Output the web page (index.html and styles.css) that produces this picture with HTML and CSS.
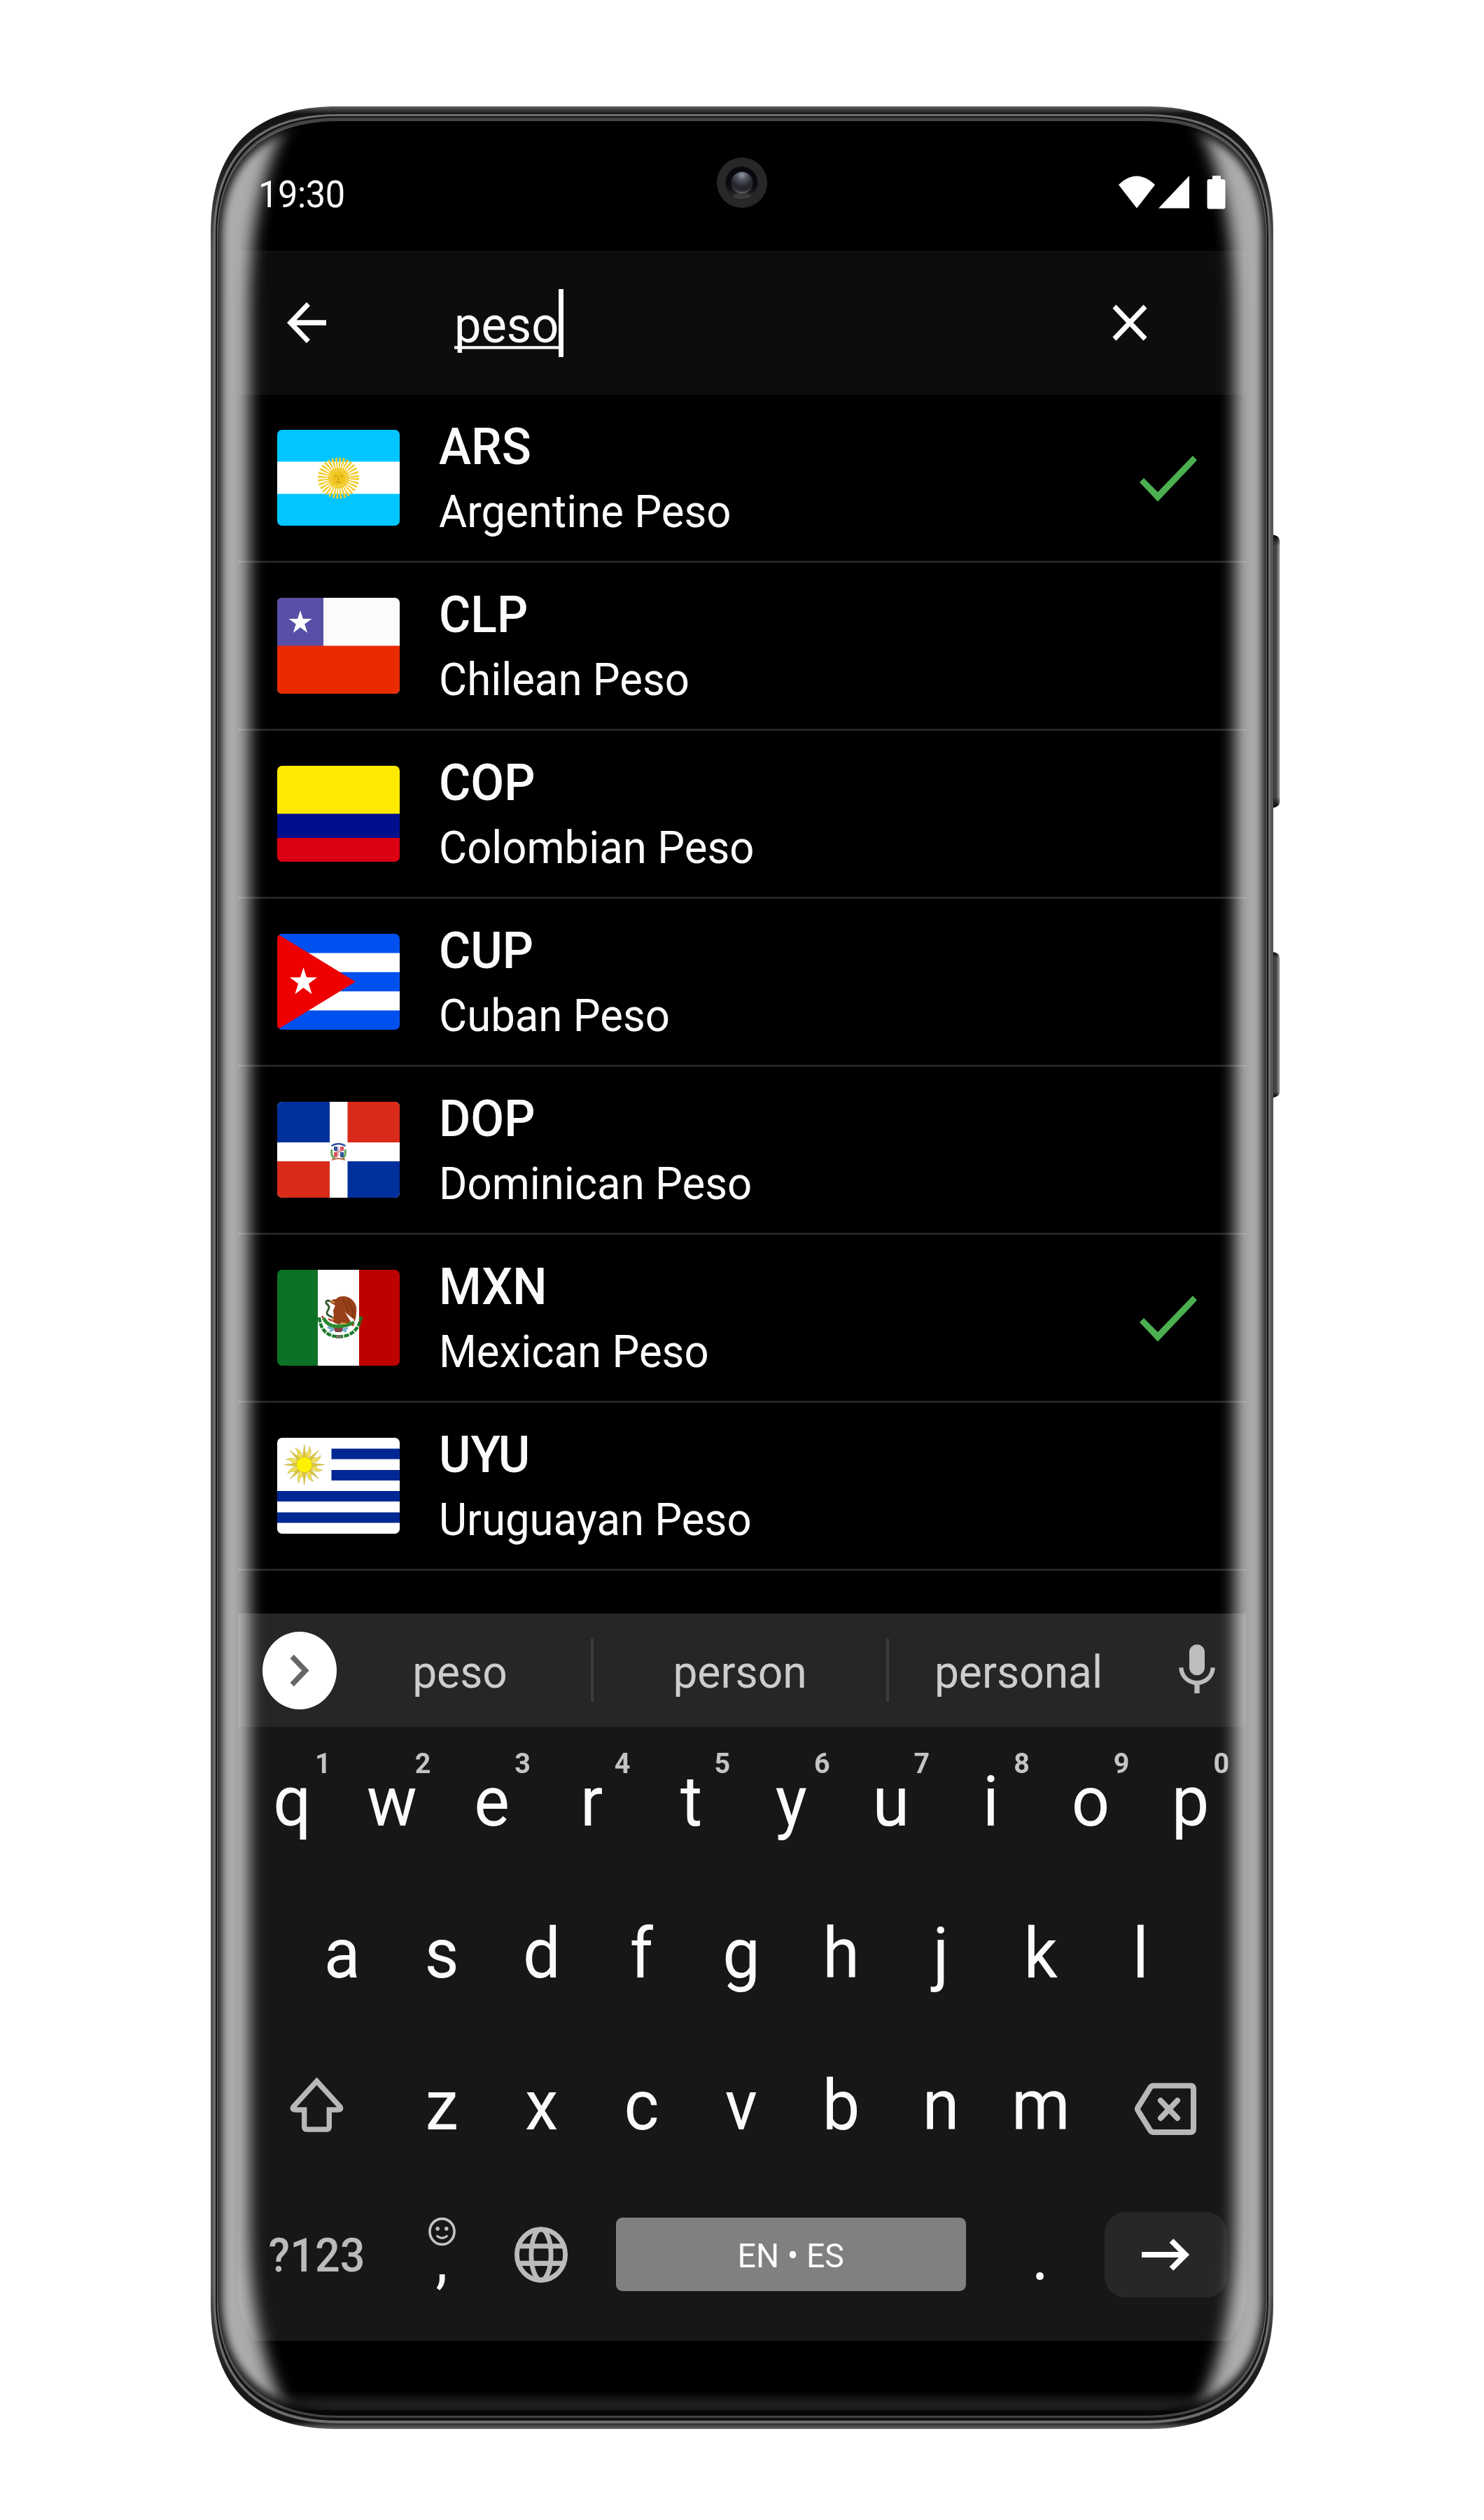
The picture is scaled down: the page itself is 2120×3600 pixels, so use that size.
FILE: index.html
```html
<!DOCTYPE html>
<html lang="en">
<head>
<meta charset="utf-8">
<title>Currency search</title>
<link rel="stylesheet" href="styles.css">
</head>
<body>
<main class="phone">
  <svg class="phone-body" viewBox="301 152 1528 3318" aria-hidden="true">
    <defs>
      <linearGradient id="shell" x1="0" y1="152" x2="0" y2="3470" gradientUnits="userSpaceOnUse">
        <stop offset="0" stop-color="#626262"/><stop offset=".0032" stop-color="#141414"/><stop offset=".025" stop-color="#1c1c1c"/><stop offset=".06" stop-color="#555"/>
        <stop offset=".94" stop-color="#555"/><stop offset=".975" stop-color="#1c1c1c"/><stop offset=".9968" stop-color="#141414"/><stop offset="1" stop-color="#6a6a6a"/>
      </linearGradient>
      <linearGradient id="button" x1="0" x2="1" y1="0" y2="0">
        <stop offset="0" stop-color="#222"/><stop offset=".3" stop-color="#484848"/><stop offset=".65" stop-color="#484848"/><stop offset=".75" stop-color="#888"/><stop offset="1" stop-color="#777"/>
      </linearGradient>
      <linearGradient id="button-ends" x1="0" x2="0" y1="0" y2="1">
        <stop offset="0" stop-color="#000" stop-opacity=".9"/><stop offset=".04" stop-color="#000" stop-opacity="0"/><stop offset=".96" stop-color="#000" stop-opacity="0"/><stop offset="1" stop-color="#000" stop-opacity=".9"/>
      </linearGradient>
    </defs>
    <path fill="url(#button)" d="M1818 764q10 1 10 9V1145q0 8-10 9z"/>
    <path fill="url(#button-ends)" d="M1818 764q10 1 10 9V1145q0 8-10 9z"/>
    <path fill="url(#button)" d="M1818 1360q10 1 10 9V1559q0 8-10 9z"/>
    <path fill="url(#button-ends)" d="M1818 1360q10 1 10 9V1559q0 8-10 9z"/>
    <path fill="url(#shell)" d="M301 332C301 213 362 152 481 152H1639C1758 152 1819 213 1819 332V3290C1819 3409 1758 3470 1639 3470H481C362 3470 301 3409 301 3290Z"/>
    <path fill="#6e6e6e" d="M305 336C305 221 368 163 483 163H1637C1752 163 1815 221 1815 336V3286C1815 3401 1752 3462 1637 3462H483C368 3462 305 3401 305 3286Z"/>
    <path fill="#101010" d="M308 337C308 224 370 166 483 166H1637C1750 166 1812 224 1812 337V3285C1812 3398 1750 3458 1637 3458H483C370 3458 308 3398 308 3285Z"/>
    <path fill="#444" d="M310 338C310 226 372 168 484 168H1636C1748 168 1810 226 1810 338V3284C1810 3396 1748 3454 1636 3454H484C372 3454 310 3396 310 3284Z"/>
    <path fill="#000" d="M311 341C311 230 374 173 485 173H1635C1746 173 1809 230 1809 341V3280C1809 3392 1746 3451 1635 3451H485C374 3451 311 3392 311 3280Z"/>
  </svg>

  <div class="screen">
    <header class="status">
      <span class="clock">19:30</span>
      <svg class="camera" viewBox="0 0 72 72" aria-hidden="true">
        <defs>
          <radialGradient id="lens" cx=".5" cy=".15" r=".85"><stop offset="0" stop-color="#8d97a3"/><stop offset=".3" stop-color="#50525c"/><stop offset=".65" stop-color="#24252c"/><stop offset=".85" stop-color="#2a2b31"/><stop offset="1" stop-color="#6a6b70"/></radialGradient>
          <linearGradient id="barrel" x1="0" x2="0" y1="0" y2="1"><stop offset="0" stop-color="#06060c"/><stop offset=".6" stop-color="#0b0b10"/><stop offset="1" stop-color="#303030"/></linearGradient>
        </defs>
        <circle cx="36" cy="36" r="36" fill="#272727"/>
        <circle cx="35.500" cy="36" r="23" fill="url(#barrel)"/>
        <circle cx="36" cy="36" r="15.500" fill="url(#lens)"/>
        <ellipse cx="36" cy="55" rx="13" ry="4" fill="#484848" opacity=".6"/>
      </svg>
      <svg class="signals" viewBox="0 0 156 50" aria-hidden="true" fill="#fff">
        <path d="M1 14Q26.500-11 53 14L27 47.500Z"/>
        <path d="M58 47.500H102V1Z"/>
        <path d="M135 1h12v5h3.500q3 0 3 3v36.500q0 3-3 3h-20q-3 0-3-3V9q0-3 3-3H135z"/>
      </svg>
    </header>

    <div class="appbar">
      <svg class="icon24" viewBox="0 0 24 24" preserveAspectRatio="none" fill="#fff"><path d="M20 11H7.830l5.590-5.590L12 4l-8 8 8 8 1.410-1.410L7.830 13H20v-2z"/></svg>
      <div class="query"><span class="query-text">peso</span><i class="caret"></i></div>
      <svg class="icon24" viewBox="0 0 24 24" preserveAspectRatio="none" fill="#fff"><path d="M19 6.410L17.590 5 12 10.590 6.410 5 5 6.410 10.590 12 5 17.590 6.410 19 12 13.410 17.590 19 19 17.590 13.410 12z"/></svg>
    </div>

    <ul class="list">
      <li class="row">
        <svg class="flag" viewBox="0 0 175 137"><path fill="#00c5ff" d="M0 0h175v137H0z"/><path fill="#fff" d="M0 45.500h175v46H0z"/><circle cx="87.500" cy="69" r="21" fill="none" stroke="#f3cb2a" stroke-width="17" stroke-dasharray="2.200 1.923"/><circle cx="87.500" cy="69" r="14.500" fill="#f3cb2a"/><circle cx="87.500" cy="69" r="11" fill="#efc41c" stroke="#f8df70"/><path d="M82 66h4M90 66h4M87.500 67v5M84.500 74.500h6" stroke="#c2951b" stroke-width="1.400" fill="none"/></svg>
        <div class="label"><b>ARS</b><span>Argentine Peso</span></div>
        <svg class="check" viewBox="0 0 82 66"><path fill="#4caf50" d="M0 38l6-6 20 20L76 0l6 6.500L26 65.500z"/></svg>
      </li>
      <li class="row">
        <svg class="flag" viewBox="0 0 175 137"><path fill="#fbfbfb" d="M0 0h175v137H0z"/><path fill="#584fa6" d="M0 0h66v69H0z"/><path fill="#ea2a00" d="M0 68.500h175V137H0z"/><path fill="#fff" d="M33 18l3.900 12.100H49.500L39.200 37.600 43.200 50 33 42.200 22.800 50l4-12.400L16.500 30.100H29.100z"/></svg>
        <div class="label"><b>CLP</b><span>Chilean Peso</span></div>
      </li>
      <li class="row">
        <svg class="flag" viewBox="0 0 175 137"><path fill="#ffe900" d="M0 0h175v69H0z"/><path fill="#00108c" d="M0 68.500h175v35H0z"/><path fill="#db0012" d="M0 103h175v34H0z"/></svg>
        <div class="label"><b>COP</b><span>Colombian Peso</span></div>
      </li>
      <li class="row">
        <svg class="flag" viewBox="0 0 175 137"><path fill="#0050f0" d="M0 0h175v137H0z"/><path fill="#fff" d="M0 27.400h175v27.400H0zM0 82.200h175v27.400H0z"/><path fill="#ee0000" d="M0 0l112 68.500L0 137z"/><path fill="#fff" d="M37.500 48l4.500 14.300H57L45 71.200l4.600 15-12.100-9.200-12.100 9.200 4.600-15L18 62.300H33z"/></svg>
        <div class="label"><b>CUP</b><span>Cuban Peso</span></div>
      </li>
      <li class="row">
        <svg class="flag" viewBox="0 0 175 137"><path fill="#fff" d="M0 0h175v137H0z"/><path fill="#00309c" d="M0 0h75v58H0zM100.500 85H175v52h-74.500z"/><path fill="#d92a1a" d="M100.500 0H175v58h-74.500zM0 85h75v52H0z"/><path d="M77.500 63q10-6 20 0" stroke="#28509c" stroke-width="2.400" fill="none"/><path d="M78 68q-2 10 5 14M97 68q2 10-5 14" stroke="#6aa55d" stroke-width="3" fill="none"/><path fill="#34539c" d="M81 64h5v6h-5zM90 72h5v7h-5z"/><path fill="#d8535a" d="M90 64h5v6h-5zM81 72h5v7h-5z"/><path d="M87.500 65v12M83 71h9" stroke="#d9a3b4" stroke-width="2"/><path d="M78 83q9-4 19 0" stroke="#c86a52" stroke-width="2" fill="none"/></svg>
        <div class="label"><b>DOP</b><span>Dominican Peso</span></div>
      </li>
      <li class="row">
        <svg class="flag" viewBox="0 0 175 137"><path fill="#0c7225" d="M0 0h58.500v137H0z"/><path fill="#fff" d="M58 0h59.500v137H58z"/><path fill="#bd0000" d="M117 0h58v137h-58z"/><path d="M60 68q3 27 28 27.500Q115 95 120 67" fill="none" stroke="#1d7a2c" stroke-width="4.500" stroke-dasharray="7 1.500"/><path d="M66 69q5 9 13 11 15 3 31-5" fill="none" stroke="#2b8a2e" stroke-width="5"/><path fill="#974019" d="M76 47q0-5 8-5 4-5 14-4 12 3 15 15 1 10-2 21L97 61l8 13q-6 5-13 3l-4 1-6-2-5-4 4-6-1-8 3-7z"/><path d="M108 70q2-14-7-25M101 61q0-10-8-19" stroke="#7c3010" fill="none" stroke-width="1.500"/><path fill="#f4ece6" d="M96 60l14 11-1 3z"/><path d="M76 45q-7-3-6 3 6 4 3 9-4 5 0 8l6 3" fill="none" stroke="#35552f" stroke-width="2.800"/><path d="M77 44q3 3 5 3M81 70l-4 3M91 76l8 1" stroke="#d6a13b" stroke-width="2" fill="none"/><path d="M72 82l9 3-6 3M101 83l-8 3 6 2" fill="none" stroke="#70abc9" stroke-width="3"/><path fill="#83423f" d="M81 83h13l-2 6h-9z"/><path d="M64 66l2 3M73 70l5 3M107 78l2 2" stroke="#b92b2b" stroke-width="2.500"/><path fill="#6e7560" d="M84 93h8v5h-8z"/></svg>
        <div class="label"><b>MXN</b><span>Mexican Peso</span></div>
        <svg class="check" viewBox="0 0 82 66"><path fill="#4caf50" d="M0 38l6-6 20 20L76 0l6 6.500L26 65.500z"/></svg>
      </li>
      <li class="row">
        <svg class="flag" viewBox="0 0 175 137">
          <path fill="#fff" d="M0 0h175v137H0z"/><path fill="#002894" d="M77.500 15.500H175v15H77.500zM77.500 46H175v15H77.500zM0 76h175v15H0zM0 106.500h175v15H0z"/>
          <defs><path id="ray" d="M-4 0L0-29 4 0z"/><path id="wave" d="M-4 0q-3-12 1-18 2-4 0-9 7 6 5 13-1 7 2 14z"/></defs>
          <g transform="translate(38.700 38.500)" fill="#f0df58" stroke="#b9aa3a" stroke-width=".5">
            <use href="#wave" transform="rotate(22.500)"/><use href="#wave" transform="rotate(67.500)"/><use href="#wave" transform="rotate(112.500)"/><use href="#wave" transform="rotate(157.500)"/><use href="#wave" transform="rotate(202.500)"/><use href="#wave" transform="rotate(247.500)"/><use href="#wave" transform="rotate(292.500)"/><use href="#wave" transform="rotate(337.500)"/>
            <g fill="#dcc53c"><use href="#ray"/><use href="#ray" transform="rotate(45)"/><use href="#ray" transform="rotate(90)"/><use href="#ray" transform="rotate(135)"/><use href="#ray" transform="rotate(180)"/><use href="#ray" transform="rotate(225)"/><use href="#ray" transform="rotate(270)"/><use href="#ray" transform="rotate(315)"/></g>
            <circle r="11" fill="#fff200"/>
          </g>
        </svg>
        <div class="label"><b>UYU</b><span>Uruguayan Peso</span></div>
      </li>
    </ul>

    <section class="keyboard">
      <div class="suggest">
        <svg class="expand" viewBox="0 0 108 108" preserveAspectRatio="none"><circle cx="54" cy="54" r="54" fill="#fff"/><path d="M43 34.500L62.500 54 43 73.500" fill="none" stroke="#666" stroke-width="7.500"/></svg>
        <div class="word first"><span>peso</span></div><div class="word"><span>person</span></div><div class="word last"><span>personal</span></div>
        <svg class="mic" viewBox="0 0 24 24" fill="#bdbdbd"><path d="M12 14c1.660 0 3-1.340 3-3V5c0-1.660-1.340-3-3-3S9 3.340 9 5v6c0 1.660 1.340 3 3 3zm5.300-3c0 3-2.540 5.100-5.300 5.100S6.700 14 6.700 11H5c0 3.410 2.720 6.230 6 6.720V21h2v-3.280c3.280-.480 6-3.300 6-6.720h-1.700z"/></svg>
      </div>
      <div class="keys">
        <span class="key">q<sup>1</sup></span><span class="key">w<sup>2</sup></span><span class="key">e<sup>3</sup></span><span class="key">r<sup>4</sup></span><span class="key">t<sup>5</sup></span><span class="key">y<sup>6</sup></span><span class="key">u<sup>7</sup></span><span class="key">i<sup>8</sup></span><span class="key">o<sup>9</sup></span><span class="key">p<sup>0</sup></span>
      </div>
      <div class="keys">
        <span class="key">a</span><span class="key">s</span><span class="key">d</span><span class="key">f</span><span class="key">g</span><span class="key">h</span><span class="key">j</span><span class="key">k</span><span class="key">l</span>
      </div>
      <div class="keys">
        <span class="key wide"><svg class="shift" viewBox="0 0 80 80" preserveAspectRatio="none"><path d="M40 6L74 43q2 4-3 4H58V71q0 4-4 4H26q-4 0-4-4V47H9q-5 0-3-4z" fill="none" stroke="#b8b8b8" stroke-width="7.500"/></svg></span>
        <span class="key">z</span><span class="key">x</span><span class="key">c</span><span class="key">v</span><span class="key">b</span><span class="key">n</span><span class="key">m</span>
        <span class="key wide"><svg class="erase" viewBox="0 0 88 74" preserveAspectRatio="none" fill="none" stroke="#b8b8b8" stroke-width="8"><path d="M27 4H79q5 0 5 5v56q0 5-5 5H27q-3 0-5-3L4.500 39q-1-2 0-4L22 7q2-3 5-3z"/><path d="M37 25L61 50M61 25L37 50" stroke-linecap="round"/></svg></span>
      </div>
      <div class="keys bottom">
        <span class="key wide mode">?123</span>
        <span class="key"><span class="comma">,</span><svg class="smile" viewBox="0 0 40 40"><circle cx="20" cy="20" r="18" fill="none" stroke="#c4c4c4" stroke-width="3.700"/><circle cx="13.500" cy="16" r="2.800" fill="#c4c4c4"/><circle cx="26.500" cy="16" r="2.800" fill="#c4c4c4"/><path d="M12 25.500q8 7 16 0" fill="none" stroke="#c4c4c4" stroke-width="3"/></svg></span>
        <span class="key"><svg class="globe" viewBox="0 0 78 78" fill="none" stroke="#bbb" stroke-width="7"><circle cx="39" cy="39" r="35.500"/><ellipse cx="39" cy="39" rx="14.500" ry="35.500"/><path d="M6 27H72M6 51H72"/></svg></span>
        <div class="space"><span>EN • ES</span></div>
        <span class="key">.</span>
        <span class="enter"><svg viewBox="0 0 70 46" fill="none" stroke="#fff" stroke-width="8"><path d="M1 23H62M43.500 3L63.500 23 43.500 43"/></svg></span>
      </div>
    </section>
  </div>

  <svg class="edge-glow" viewBox="301 152 1528 3318" aria-hidden="true">
    <defs>
      <clipPath id="glass"><path d="M310 341C310 230 373 171 484 171H1636C1747 171 1810 230 1810 341V3280C1810 3392 1747 3451 1636 3451H484C373 3451 310 3392 310 3280Z"/></clipPath>
      <filter id="soft" x="201" y="52" width="1728" height="3518" filterUnits="userSpaceOnUse"><feGaussianBlur stdDeviation="11"/></filter>
      <filter id="rim" x="201" y="52" width="1728" height="3518" filterUnits="userSpaceOnUse"><feGaussianBlur stdDeviation="6"/></filter>
      <linearGradient id="chin" x1="0" x2="0" y1="3415" y2="3452" gradientUnits="userSpaceOnUse"><stop offset="0" stop-color="#2c2c2c" stop-opacity="0"/><stop offset=".75" stop-color="#2e2e2e"/><stop offset=".76" stop-color="#161616"/><stop offset="1" stop-color="#1a1a1a"/></linearGradient>
    </defs>
    <g clip-path="url(#glass)">
      <path fill="url(#chin)" d="M400 3415H1720V3452H400z"/>
      <path filter="url(#soft)" fill="#acacac" fill-rule="evenodd" d="M240 90H1880V3530H240ZM356 3170V450C356 320 374 225 446 100H1674C1746 225 1764 320 1764 450V3170C1764 3300 1746 3395 1674 3520H446C374 3395 356 3300 356 3170Z"/>
      <path filter="url(#rim)" fill="none" stroke="#000" stroke-opacity=".85" stroke-width="18" d="M308 341C308 230 371 171 484 171H1636C1749 171 1812 230 1812 341V3280C1812 3392 1749 3451 1636 3451H484C371 3451 308 3392 308 3280Z"/>
    </g>
  </svg>
</main>
</body>
</html>
```
FILE: styles.css
```css
* { box-sizing: border-box; }

body {
  margin: 0;
  background: #fff;
  font-family: Roboto, "Liberation Sans", sans-serif;
  color: #fbfbfb;
}

.phone {
  position: relative;
  width: 1518px;
  height: 3318px;
  margin: 152px 0 0 301px;
  padding: 48px 39px;
  isolation: isolate;
}

.phone-body, .edge-glow {
  position: absolute;
  top: 0;
  left: 0;
  width: 1528px;
  height: 3318px;
}
.phone-body { z-index: -1; }
.edge-glow { mix-blend-mode: screen; pointer-events: none; }

.screen {
  display: flex;
  flex-direction: column;
  height: 3200px;
  background: #000;
  border-radius: 130px;
  overflow: hidden;
}

/* The interface type is drawn slightly taller than its natural proportions. */
.clock, .query-text, .label b, .label span, .word span, .space span, .key {
  transform: scaleY(1.05);
}

.status {
  display: grid;
  grid-template-columns: 1fr 72px 1fr;
  align-items: start;
  height: 158px;
  padding: 25px 27px 0 29px;
}
.clock { font-size: 50.5px; line-height: 62px; margin-top: 22px; letter-spacing: -.4px; }
.camera { width: 72px; height: 72px; margin-left: -1px; }
.signals { width: 156px; height: 50px; margin-top: 25px; justify-self: end; }

.appbar {
  display: flex;
  align-items: center;
  height: 206px;
  padding: 0 124px 0 56px;
  background: #0d0d0d;
}
.icon24 { width: 84px; height: 88px; flex: none; }
.query { display: flex; align-items: center; flex: 1; padding-left: 169px; }
.query-text {
  font-size: 68.5px;
  line-height: 97px;
  width: 149px;
  margin-top: 7px;
  white-space: nowrap;
  text-decoration: underline;
  text-decoration-thickness: 4px;
  text-underline-offset: 5px;
  text-decoration-skip-ink: none;
}
.caret { width: 7px; height: 97px; background: #fff; }

.list { list-style: none; margin: 0; padding: 0; }
.row {
  display: flex;
  align-items: center;
  height: 240px;
  padding: 0 70px 1px 56px;
  border-bottom: 3px solid #242424;
}
.flag { width: 175px; height: 137px; border-radius: 7px; flex: none; }
.label { display: flex; flex-direction: column; flex: 1; padding: 5px 0 0 56px; }
.label b { font-weight: 500; font-size: 69.5px; line-height: 92px; }
.label span { font-size: 61.7px; line-height: 92px; }
.check { width: 82px; height: 66px; margin-top: 3px; }

.keyboard {
  height: 1039px;
  margin-top: 61px;
  background: #171717;
}
.suggest {
  display: flex;
  align-items: center;
  height: 162px;
  padding-left: 35px;
  background: #262626;
}
.expand { width: 106px; height: 111px; }
.word {
  display: flex;
  align-items: center;
  justify-content: center;
  width: 422px;
  height: 90px;
  padding-top: 5px;
  font-size: 62.3px;
  color: #cdcdcd;
  border-right: 4px solid #3c3c3c;
}
.first { width: 367px; padding-right: 11px; }
.last { width: 396px; border: 0; padding-right: 26px; }
.mic { width: 88px; height: 88px; }

.keys {
  display: flex;
  justify-content: center;
  height: 217px;
  padding: 0 7px 6px 5px;
}
.key {
  position: relative;
  display: flex;
  align-items: center;
  justify-content: center;
  width: 142.6px;
  font-size: 95.5px;
}
.key sup {
  position: absolute;
  left: 104px;
  top: 31px;
  font-size: 39.5px;
  line-height: 48px;
  font-weight: 700;
  color: #c4c4c4;
}
.wide { width: 213.9px; }
.shift { width: 79px; height: 76px; margin-top: 1px; }
.erase { width: 88px; height: 71px; margin-top: 11px; }
.bottom { align-items: center; height: 205px; padding: 0 7px 0 5px; }
.bottom .key { height: 211px; }
.bottom .mode { font-size: 63px; font-weight: 500; color: #bbb; padding-top: 3px; }
.comma { font-size: 86px; padding-top: 14px; }
.smile { position: absolute; left: 52px; top: 55px; width: 39px; height: 39px; }
.globe { width: 76px; height: 76px; }
.space {
  display: flex;
  align-items: center;
  justify-content: center;
  width: 500px;
  height: 105px;
  margin: 0 35px;
  padding-top: 2px;
  border-radius: 9px;
  background: #808080;
  font-size: 46.5px;
}
.enter {
  display: flex;
  align-items: center;
  justify-content: center;
  width: 175px;
  height: 122px;
  margin: 0 19px 0 21px;
  border-radius: 30px;
  background: #272727;
}
.enter svg { width: 70px; height: 46px; margin-left: -2px; }
```
